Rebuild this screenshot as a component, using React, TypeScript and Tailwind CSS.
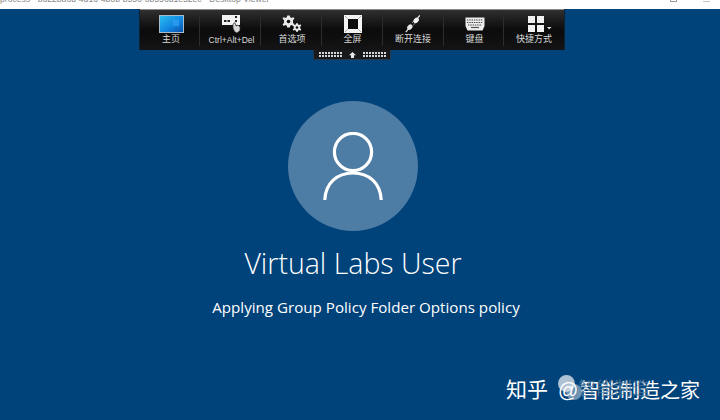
const cjk = "font-['Liberation_Sans','Noto_Sans_CJK_SC',sans-serif]";

const MonitorIcon = () => (
  <svg width="25" height="18" viewBox="0 0 25 18">
    <defs>
      <linearGradient id="screen" x1="0" y1="0" x2="1" y2="1">
        <stop offset="0" stopColor="#2cc0ee" />
        <stop offset="0.55" stopColor="#1288e2" />
        <stop offset="1" stopColor="#0a4fa8" />
      </linearGradient>
    </defs>
    <rect x="0.5" y="0.5" width="24" height="17" fill="url(#screen)" stroke="#a9bccb" />
    <rect x="14" y="5" width="6" height="6" fill="#2f9df0" opacity="0.8" />
  </svg>
);

const CadIcon = () => (
  <svg width="20" height="18" viewBox="0 0 20 18">
    <rect x="0" y="0" width="18" height="10" fill="#f2f2f2" />
    <rect x="2" y="5" width="2.5" height="2" fill="#222" />
    <rect x="5.5" y="5" width="2.5" height="2" fill="#222" />
    <rect x="13" y="1" width="2" height="2" fill="#222" />
    <rect x="13" y="5" width="2" height="2" fill="#222" />
    <path d="M11 9 L13 7.5 L14 11 L16 10 L18 12 L18 15.5 L15 18 L12.5 16.5 L11 13 Z" fill="#d8d8d8" stroke="#333" strokeWidth="0.7" />
  </svg>
);

const gearPath =
  "M-1.3 -6 H1.3 L1.7 -4.2 L3.3 -3.5 L4.8 -4.5 L6 -2.7 L4.5 -1.4 V1.4 L6 2.7 L4.8 4.5 L3.3 3.5 L1.7 4.2 L1.3 6 H-1.3 L-1.7 4.2 L-3.3 3.5 L-4.8 4.5 L-6 2.7 L-4.5 1.4 V-1.4 L-6 -2.7 L-4.8 -4.5 L-3.3 -3.5 L-1.7 -4.2 Z";

const GearsIcon = () => (
  <svg width="20" height="18" viewBox="0 0 20 18">
    <g transform="translate(6.5 6.5)">
      <path d={gearPath} fill="#e8e8e8" />
      <circle r="1.8" fill="#111" />
    </g>
    <g transform="translate(15 12.5) scale(0.72)">
      <path d={gearPath} fill="#e8e8e8" />
      <circle r="1.8" fill="#111" />
    </g>
  </svg>
);

const FullscreenIcon = () => (
  <svg width="18" height="18" viewBox="0 0 18 18">
    <rect x="0" y="0" width="18" height="18" fill="#f4f4f4" />
    <rect x="4" y="4" width="10" height="10" fill="#0c0c0c" />
    <path d="M1 1 L4 4 M17 1 L14 4 M1 17 L4 14 M17 17 L14 14" stroke="#999" strokeWidth="0.8" />
  </svg>
);

const PlugIcon = () => (
  <svg width="18" height="18" viewBox="0 0 18 20">
    <path d="M1 19 L4 15.5 M13 5 L16.5 0.5" stroke="#e6e6e6" strokeWidth="1.4" fill="none" />
    <ellipse cx="5.5" cy="13.5" rx="3.4" ry="2.5" transform="rotate(-45 5.5 13.5)" fill="#e6e6e6" />
    <path d="M8 8.5 L10 7 M9.5 11 L11.5 9" stroke="#ccc" strokeWidth="0.9" />
    <ellipse cx="12.5" cy="6" rx="3.4" ry="2.5" transform="rotate(-45 12.5 6)" fill="#f2f2f2" />
  </svg>
);

const KeyboardIcon = () => (
  <svg width="20" height="14" viewBox="0 0 20 14">
    <path d="M0.5 0.5 H19.5 V9 L17.5 13.5 H2.5 L0.5 9 Z" fill="#ececec" />
    <path d="M2 3 H18 M2 5.5 H18 M3 8 H17" stroke="#444" strokeWidth="1" strokeDasharray="1.4 0.9" />
    <path d="M6 10.5 H14" stroke="#555" strokeWidth="1.2" />
  </svg>
);

const ShortcutIcon = () => (
  <svg className="ml-[12px]" width="24" height="16" viewBox="0 0 24 16">
    <rect x="0" y="0" width="7" height="7" fill="#f2f2f2" />
    <rect x="9" y="0" width="7" height="7" fill="#f2f2f2" />
    <rect x="0" y="9" width="7" height="7" fill="#f2f2f2" />
    <rect x="9" y="9" width="7" height="7" fill="#f2f2f2" />
    <path d="M19 11 H23.5 L21.2 13.5 Z" fill="#ddd" />
  </svg>
);

const UserIcon = () => (
  <svg width="60" height="68" viewBox="0 0 60 68" fill="none" stroke="white" strokeWidth="3.2">
    <circle cx="30" cy="20" r="18.6" />
    <path d="M1.8 68 C2.5 51 14 41 30 41 C46 41 57.5 51 58.2 68" />
  </svg>
);

const tools = [
  { label: "主页", icon: <MonitorIcon />, width: "w-[59px] pl-[3px]", text: "text-[9px]" },
  { label: "Ctrl+Alt+Del", icon: <CadIcon />, width: "w-[60px] pl-[3px]", text: "text-[8.5px] pt-[1px]" },
  { label: "首选项", icon: <GearsIcon />, width: "w-[60px] pl-[2px]", text: "text-[9px]" },
  { label: "全屏", icon: <FullscreenIcon />, width: "w-[60px] pl-[1px]", text: "text-[9px]" },
  { label: "断开连接", icon: <PlugIcon />, width: "w-[60px]", text: "text-[9px]" },
  { label: "键盘", icon: <KeyboardIcon />, width: "w-[59px] pl-[2px]", text: "text-[9px]" },
  { label: "快捷方式", icon: <ShortcutIcon />, width: "w-[60px]", text: "text-[9px]" },
];

const Grip = () => (
  <div className="grid grid-cols-8 gap-[1px]">
    {Array.from({ length: 16 }).map((_, i) => (
      <span key={i} className="h-[2px] w-[2px] bg-[#d8d8d8]" />
    ))}
  </div>
);

export default function App() {
  return (
    <div className={`relative flex h-[420px] w-[720px] flex-col overflow-hidden bg-[#00427a] ${cjk}`}>
      <div className="flex h-[9px] shrink-0 justify-between overflow-hidden bg-white">
        <div className="-mt-[7px] truncate text-[8.6px] leading-[12px] text-[#8a8a8a]">
          process - b322ba6d-4d16-4b8b-b556-8b556d1e52ec - Desktop Viewer
        </div>
        <div className="mr-[10px] flex gap-[26px]">
          <span className="-mt-[5px] h-[7px] w-[7px] border border-[#9a9a9a]" />
          <span className="-mt-[5px] h-[7px] w-[7px] border-b border-[#c4c4c4]" />
        </div>
      </div>

      {/* floating toolbar */}
      <div className="absolute left-[140px] top-[9px] flex flex-col items-center">
        <div className="flex h-[41px] w-[424px] border-t border-t-[#8c8c8c] bg-gradient-to-b from-[#303030] via-[#0b0b0b] to-[#141416] shadow-[1px_0_0_#0b2438,-1px_0_0_#0b2438]">
          {tools.map((t, i) => (
            <div key={t.label} className="flex">
              <div className={`flex ${t.width} flex-col items-center pt-[5px]`}>
                <div className="flex h-[18px] items-center justify-center">{t.icon}</div>
                <div className={`mt-[1px] whitespace-nowrap leading-[10px] text-[#dadada] ${t.text}`}>{t.label}</div>
              </div>
              {i < tools.length - 1 && <div className="my-[4px] w-px bg-[#2c2c2c]" />}
            </div>
          ))}
        </div>
        <div className="flex h-[10px] w-[78px] items-center justify-center gap-[7px] rounded-b-[2px] border-b border-l border-r border-[#26384a] bg-[#17191c]">
          <Grip />
          <svg width="7" height="6" viewBox="0 0 7 6">
            <path d="M3.5 0 L7 3.2 H5 V6 H2 V3.2 H0 Z" fill="#e8e8e8" />
          </svg>
          <Grip />
        </div>
      </div>

      {/* sign-in screen */}
      <div className="flex flex-1 flex-col items-center pt-[92px]">
        <div className="mr-[14px] flex flex-col items-center">
          <div className="flex h-[130px] w-[130px] items-center justify-center rounded-full bg-[#4d7ca5]">
            <UserIcon />
          </div>
          <div className="mt-[12px] font-['Open_Sans'] text-[28.5px] font-light leading-[40px] text-white">
            Virtual Labs User
          </div>
          <div className="ml-[26px] mt-[13px] font-['Open_Sans'] text-[15.15px] leading-[22px] text-white">
            Applying Group Policy Folder Options policy
          </div>
        </div>
      </div>

      {/* zhihu watermark */}
      <div className="absolute left-[506px] top-[378px] text-[21px] leading-[24px] text-white">知乎</div>
      <div className="absolute left-[558px] top-[375px] h-[17px] w-[17px] rounded-full bg-[#d9e2ea]/80" />
      <div className="absolute left-[566px] top-[384px] h-[16px] w-[16px] rounded-full bg-[#d9e2ea]/50" />
      <div className="absolute left-[558px] top-[378px] text-[20px] leading-[24px] text-white">@</div>
      <div className="absolute left-[580px] top-[379px] text-[20px] leading-[24px] text-white">智能制造之家</div>
      <div className="absolute left-[578px] top-[377px] text-[18px] leading-[24px] text-[#5a7d9c]/70">智能制造</div>
    </div>
  );
}
